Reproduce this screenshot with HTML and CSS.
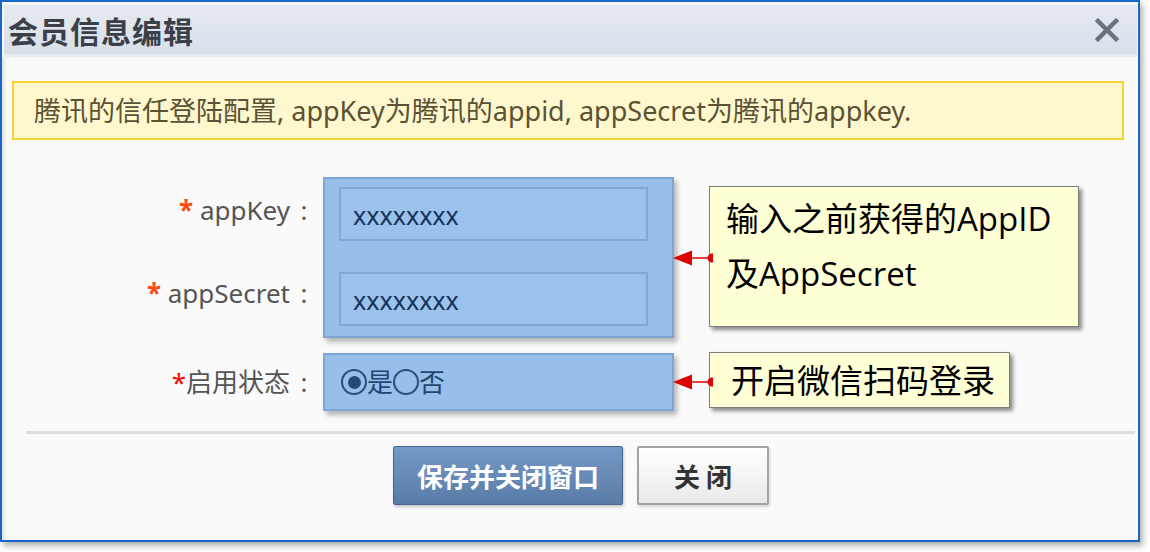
FILE: index.html
```html
<!DOCTYPE html>
<html lang="zh-CN">
<head>
<meta charset="utf-8">
<title>会员信息编辑</title>
<link rel="stylesheet" href="styles.css">
</head>
<body>
<div class="window">
  <div class="titlebar">
    <span class="title">会员信息编辑</span>
    <svg class="close" width="24" height="24" viewBox="0 0 24 24"><path d="M3 3 L21 21 M21 3 L3 21" stroke="#6b7380" stroke-width="4.5" stroke-linecap="square"/></svg>
  </div>
  <div class="body">
    <div class="notice">腾讯的信任登陆配置, appKey为腾讯的appid, appSecret为腾讯的appkey.</div>

    <div class="group group-keys">
      <div class="labels">
        <div class="label"><span class="req">*</span> appKey<span class="colon">:</span></div>
        <div class="label"><span class="req">*</span> appSecret<span class="colon">:</span></div>
      </div>
      <div class="hl hl-keys">
        <div class="input">xxxxxxxx</div>
        <div class="input">xxxxxxxx</div>
      </div>
      <svg class="arrow" width="40" height="24" viewBox="0 0 40 24"><path d="M18 12 H39" stroke="#e00000" stroke-width="1.5"/><polygon points="0,12 19,4.5 19,19.5" fill="#e00000"/><circle cx="39" cy="12" r="4.5" fill="#e00000"/></svg>
      <div class="callout callout-keys">输入之前获得的AppID<br>及AppSecret</div>
    </div>

    <div class="group group-status">
      <div class="labels">
        <div class="label label-status"><span class="req2">*</span>启用状态<span class="colon">:</span></div>
      </div>
      <div class="hl hl-status">
        <span class="radio on"></span><span class="opt">是</span><span class="radio"></span><span class="opt">否</span>
      </div>
      <svg class="arrow" width="40" height="24" viewBox="0 0 40 24"><path d="M18 12 H39" stroke="#e00000" stroke-width="1.5"/><polygon points="0,12 19,4.5 19,19.5" fill="#e00000"/><circle cx="39" cy="12" r="4.5" fill="#e00000"/></svg>
      <div class="callout callout-status">开启微信扫码登录</div>
    </div>

    <div class="sep"></div>

    <div class="buttons">
      <button class="btn btn-primary">保存并关闭窗口</button>
      <button class="btn btn-plain">关 闭</button>
    </div>
  </div>
</div>
</body>
</html>
```
FILE: styles.css
```css
* { box-sizing: border-box; }
html, body { margin: 0; padding: 0; background: #ffffff; }
body {
  font-family: "Noto Sans", "Noto Sans CJK SC", sans-serif;
  width: 1150px;
  height: 552px;
  overflow: hidden;
}
.window {
  width: 1140px;
  height: 542px;
  border: 2px solid #1766c8;
  background: #f6f6f6;
  box-shadow: 3px 4px 6px rgba(0, 0, 0, 0.3);
  display: flex;
  flex-direction: column;
  padding-top: 3px;
}
.titlebar {
  height: 52px;
  margin: 0 1px 0 2px;
  background: linear-gradient(#e5e9f1, #d9e0ea);
  border-bottom: 3px solid #e7ebf2;
  display: flex;
  align-items: center;
  justify-content: space-between;
  padding: 0 18px 0 4px;
}
.title {
  font-family: "Noto Sans CJK SC", sans-serif;
  font-weight: 700;
  font-size: 30px;
  color: #3b4048;
  letter-spacing: 1px;
}
.close { display: block; }
.body {
  flex: 1;
  background: #fafafa;
  box-shadow: inset 4px 0 4px -2px rgba(0,0,0,0.12);
}
.notice {
  margin: 24px 14px 0 10px;
  height: 59px;
  border: 2px solid #f7d334;
  background: #fff8cf;
  color: #5a5232;
  font-size: 27px;
  line-height: 55px;
  padding-left: 20px;
  white-space: nowrap;
}
.group {
  display: flex;
}
.group-keys { margin-top: 37px; align-items: flex-start; }
.group-status { margin-top: 15px; align-items: flex-start; }
.labels {
  width: 316px;
  display: flex;
  flex-direction: column;
  margin-right: 5px;
}
.group-keys .labels { padding-top: 6px; gap: 29px; }
.label {
  text-align: right;
  font-size: 26px;
  color: #555555;
  height: 54px;
  line-height: 54px;
  white-space: nowrap;
}
.colon {
  display: inline-block;
  width: 28px;
  text-align: center;
}
.label-status { height: 58px; line-height: 58px; }
.req { color: #ff4a14; font-weight: 700; }
.req2 { color: #ff0000; }
.hl {
  width: 351px;
  background: #97bfe9;
  border: 2px solid #7fa6d3;
  box-shadow: 3px 4px 5px rgba(0, 0, 0, 0.28);
}
.hl-keys {
  height: 161px;
  padding: 8px 0 0 14px;
  display: flex;
  flex-direction: column;
  gap: 31px;
}
.input {
  width: 309px;
  height: 54px;
  border: 2px solid #80a8d5;
  background: #9ac2eb;
  color: #17325a;
  font-size: 25px;
  line-height: 52px;
  padding-left: 12px;
}
.hl-status {
  height: 58px;
  display: flex;
  align-items: center;
  padding-left: 16px;
  color: #1e4672;
  font-size: 26px;
}
.radio {
  width: 26px;
  height: 26px;
  border: 2px solid #2b4d77;
  border-radius: 50%;
  display: inline-flex;
  align-items: center;
  justify-content: center;
}
.radio.on::after {
  content: "";
  width: 13px;
  height: 13px;
  border-radius: 50%;
  background: #234a76;
}
.opt { line-height: 30px; }
.arrow {
  display: block;
  align-self: center;
  margin-left: -1px;
  margin-right: -4px;
  position: relative;
  z-index: 2;
}
.callout {
  background: #ffffd6;
  border: 1px solid #7e7e7e;
  box-shadow: 3px 3px 4px rgba(0, 0, 0, 0.45);
  color: #000000;
  font-family: "Open Sans", "Noto Sans CJK SC", sans-serif;
  font-size: 33px;
  white-space: nowrap;
}
.callout-keys {
  margin-top: 9px;
  width: 370px;
  height: 141px;
  padding: 4px 0 0 16px;
  line-height: 55px;
}
.callout-status {
  margin-top: -1px;
  width: 301px;
  height: 56px;
  padding: 3px 0 0 21px;
  line-height: 50px;
}
.sep {
  margin: 20px 3px 0 24px;
  height: 3px;
  background: #dedede;
}
.buttons {
  display: flex;
  gap: 14px;
  margin-top: 12px;
  padding-left: 391px;
}
.btn {
  height: 59px;
  font-family: "Noto Sans CJK SC", sans-serif;
  font-weight: 700;
  font-size: 26px;
  padding: 0;
  cursor: pointer;
}
.btn-primary {
  width: 230px;
  color: #ffffff;
  background: linear-gradient(#7499c6, #5a7ba7);
  border: 1px solid #46658f;
  border-radius: 2px;
  box-shadow: 1px 2px 3px rgba(0, 0, 0, 0.2);
}
.btn-plain {
  width: 132px;
  color: #333333;
  background: linear-gradient(#ffffff, #e9e9e9);
  border: 2px solid #a3a3a3;
  border-radius: 2px;
  box-shadow: 1px 2px 3px rgba(0, 0, 0, 0.15);
}
```
